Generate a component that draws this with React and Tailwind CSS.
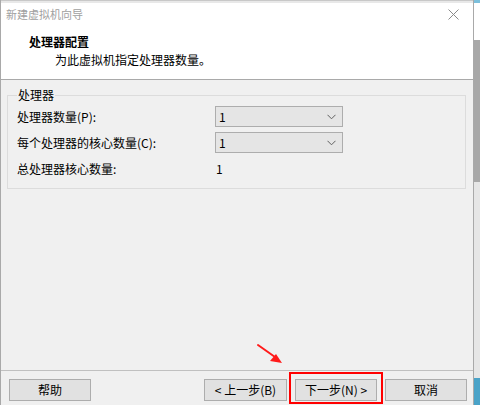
const FONT = { fontFamily: '"Microsoft YaHei", "Noto Sans CJK SC", "Noto Sans", sans-serif' };

function Combo({ value }) {
  return (
    <div className="w-[128px] h-[21px] border border-[#adadad] bg-[#e5e5e5] flex items-center justify-between pl-[3px] pr-[6px]">
      <span className="text-[12px] leading-none text-black">{value}</span>
      <svg width="9" height="6" viewBox="0 0 9 6">
        <path d="M0.5 0.8 L4.5 4.8 L8.5 0.8" fill="none" stroke="#606060" strokeWidth="1" />
      </svg>
    </div>
  );
}

function Btn({ children, w = 'w-[82px]' }) {
  return (
    <button className={`${w} h-[22px] border border-[#adadad] bg-[#e1e1e1] text-[12px] leading-none text-black flex items-center justify-center`}>
      {children}
    </button>
  );
}

export default function App() {
  return (
    <div className="w-[480px] h-[405px] relative overflow-hidden flex bg-[#f0f0f0]" style={FONT}>
      {/* ── DIALOG ── */}
      <div className="w-[474px] h-full flex flex-col border-l border-r border-[#a9a9a9]">
        {/* edge of the window behind */}
        <div className="h-[3px] shrink-0 bg-[#e8e8e8] border-t border-[#c8c8c8]" />

        {/* header */}
        <div className="h-[77px] shrink-0 bg-white border-b border-[#a9a9a9] flex flex-col">
          <div className="h-[22px] flex items-center justify-between pl-[5px] pr-[14px]">
            <span className="text-[11px] text-[#a0a0a0]">新建虚拟机向导</span>
            <svg width="11" height="11" viewBox="0 0 11 11">
              <path d="M0.5 0.5 L10.5 10.5 M10.5 0.5 L0.5 10.5" stroke="#8a8a8a" strokeWidth="1" />
            </svg>
          </div>
          <div className="mt-[8px] pl-[28px] text-[12px] leading-[18px] font-bold text-black">处理器配置</div>
          <div className="pl-[54px] text-[12px] leading-[18px] text-black">为此虚拟机指定处理器数量。</div>
        </div>

        {/* body */}
        <div className="flex-1 flex flex-col">
          <fieldset className="mt-[7px] ml-[6px] mr-[7px] border border-[#dcdcdc] pl-[9px] pb-[11px]">
            <legend className="text-[12px] leading-[16px] text-black px-[1px]">处理器</legend>
            <div className="mt-[3px] flex items-center h-[21px]">
              <span className="w-[198px] text-[12px] text-black">处理器数量(P):</span>
              <Combo value="1" />
            </div>
            <div className="mt-[5px] flex items-center h-[21px]">
              <span className="w-[198px] text-[12px] text-black">每个处理器的核心数量(C):</span>
              <Combo value="1" />
            </div>
            <div className="mt-[8px] flex items-center h-[16px]">
              <span className="w-[199px] text-[12px] text-black">总处理器核心数量:</span>
              <span className="text-[12px] text-black">1</span>
            </div>
          </fieldset>
        </div>

        {/* footer */}
        <div className="h-[35px] shrink-0 border-t border-[#c0c0c0] pt-[8px] flex pl-[8px] pr-[6px]">
          <Btn>帮助</Btn>
          <div className="flex-1" />
          <div className="flex gap-[8px]">
            <Btn w="w-[83px]">&lt; 上一步(B)</Btn>
            <Btn>下一步(N) &gt;</Btn>
            <Btn>取消</Btn>
          </div>
        </div>
      </div>

      {/* ── RIGHT EDGE OF DESKTOP ── */}
      <div className="w-[6px] h-full flex flex-col">
        <div className="h-[3px] bg-[#7cc0dc]" />
        <div className="h-[37px] bg-white" />
        <div className="h-[142px] bg-[#a8a8a8]" />
        <div className="h-[196px] bg-[#e6e6e6]" />
        <div className="flex-1 bg-[#4aa3c8]" />
      </div>

      {/* annotation */}
      <div className="absolute left-[289px] top-[372px] w-[94px] h-[32px] border-2 border-[#ff0000]" />
      <svg className="absolute left-[255px] top-[342px]" width="30" height="24" viewBox="0 0 30 24">
        <path d="M3 3 L20 15" stroke="#ff1a1a" strokeWidth="2" strokeLinecap="round" />
        <path d="M27 21 L15 19 L21 12 Z" fill="#ff1a1a" />
      </svg>
    </div>
  );
}
